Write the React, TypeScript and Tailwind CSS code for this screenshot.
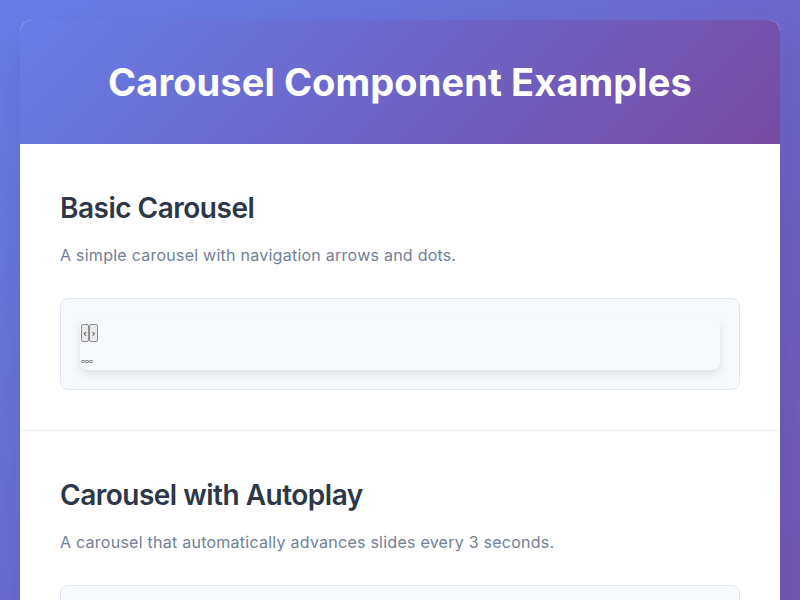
import React from "react";

type Example = {
  title: string;
  description: string;
};

const examples: Example[] = [
  { title: "Basic Carousel", description: "A simple carousel with navigation arrows and dots." },
  { title: "Carousel with Autoplay", description: "A carousel that automatically advances slides every 3 seconds." },
  { title: "Infinite Loop Carousel", description: "A carousel that loops back to the first slide after the last one." },
];

function CarouselDemo() {
  return (
    <div className="rounded-[8px] border border-[#e2e8f0] bg-[#f7fafc] p-[19px]">
      <div className="h-[52px] rounded-[8px] bg-[#f7fafc] pl-px pt-[6px] shadow-[0_4px_8px_rgba(0,0,0,0.1)]">
        <div className="flex">
          <button
            type="button"
            className="flex h-[18px] w-[8px] items-center justify-center rounded-[2px] border border-[#8f8f8f] bg-[#e9e9ed] text-[8px] leading-none text-black"
          >
            ‹
          </button>
          <button
            type="button"
            className="flex h-[18px] w-[9px] items-center justify-center rounded-[2px] border border-[#8f8f8f] bg-[#e9e9ed] text-[8px] leading-none text-black"
          >
            ›
          </button>
        </div>
        <div className="mt-[18px] flex">
          {[0, 1, 2].map((i) => (
            <button
              key={i}
              type="button"
              className="h-[3px] w-[4px] rounded-[1px] border border-[#8f8f8f] bg-[#e9e9ed]"
            />
          ))}
        </div>
      </div>
    </div>
  );
}

export default function App() {
  return (
    <div
      className="min-h-screen bg-[linear-gradient(135deg,#667eea_0%,#764ba2_100%)] px-[20px] py-[20px]"
      style={{ fontFamily: "Inter, 'Noto Sans', sans-serif" }}
    >
      <div className="overflow-hidden rounded-[12px] bg-white shadow-[0_20px_40px_rgba(0,0,0,0.1)]">
        <header className="bg-[linear-gradient(135deg,#667eea_0%,#764ba2_100%)] py-[40px] text-center">
          <h1 className="text-[38px] font-bold leading-[44px] tracking-[0.1px] text-white">
            Carousel Component Examples
          </h1>
        </header>
        {examples.map((ex) => (
          <section key={ex.title} className="border-b border-[#edf2f7] px-[40px] py-[40px]">
            <h2 className="text-[28px] font-semibold leading-[48px] tracking-[-0.5px] text-[#2d3748]">
              {ex.title}
            </h2>
            <p className="mt-[11px] mb-[31px] text-[16px] leading-[24px] tracking-[0.25px] text-[#718096]">
              {ex.description}
            </p>
            <CarouselDemo />
          </section>
        ))}
      </div>
    </div>
  );
}
